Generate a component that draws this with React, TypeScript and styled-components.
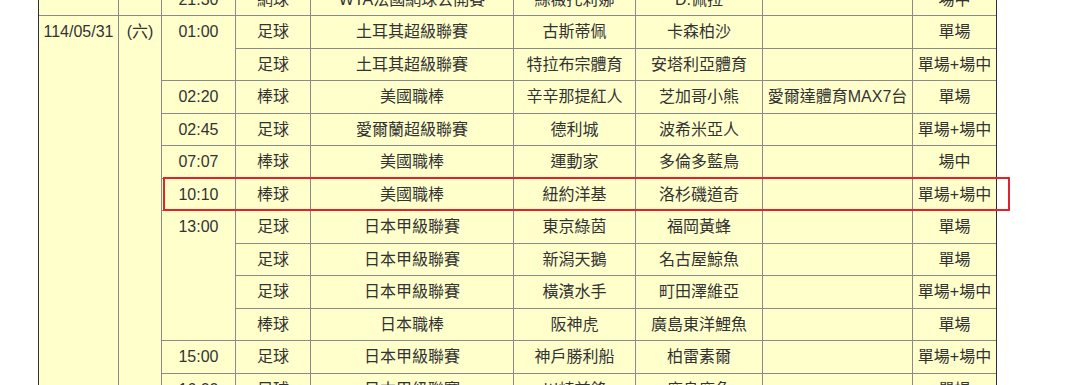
import React from "react";
import styled, { createGlobalStyle } from "styled-components";

const GlobalStyle = createGlobalStyle`
  html, body {
    margin: 0;
    padding: 0;
    background: #ffffff;
  }
  body {
    font-family: "Liberation Sans", "Noto Sans CJK TC", sans-serif;
  }
`;

const Page = styled.div`
  position: relative;
  margin-top: -16.5px;
  padding-left: 38px;
`;

const Frame = styled.div`
  display: inline-block;
  border-left: 1px solid #2e2e38;
  border-right: 1px solid #2e2e38;
`;

const Schedule = styled.table`
  border-collapse: separate;
  border-spacing: 0;
  table-layout: fixed;
  width: 957px;
  background: #ffffcc;
  color: #333333;
  font-size: 16px;
`;

const Row = styled.tr`
  height: 32.5px;
`;

const Cell = styled.td<{ $last?: boolean }>`
  box-sizing: border-box;
  padding: 5px 0 0;
  line-height: 22px;
  text-align: center;
  vertical-align: top;
  white-space: nowrap;
  overflow: hidden;
  border-bottom: 1px solid #8a8a8a;
  border-right: ${(p) => (p.$last ? "none" : "1px solid #8a8a8a")};
`;

// red marker drawn around the picked game
const Marker = styled.div`
  position: absolute;
  top: 193.5px;
  left: 163px;
  width: 847px;
  height: 34px;
  box-sizing: border-box;
  border: 2px solid #e3222b;
  pointer-events: none;
`;

interface Game {
  time?: string;
  span?: number;
  sport: string;
  league: string;
  home: string;
  away: string;
  channel?: string;
  bet: string;
}

const games: Game[] = [
  { time: "01:00", span: 2, sport: "足球", league: "土耳其超級聯賽", home: "古斯蒂佩", away: "卡森柏沙", bet: "單場" },
  { sport: "足球", league: "土耳其超級聯賽", home: "特拉布宗體育", away: "安塔利亞體育", bet: "單場+場中" },
  { time: "02:20", sport: "棒球", league: "美國職棒", home: "辛辛那提紅人", away: "芝加哥小熊", channel: "愛爾達體育MAX7台", bet: "單場" },
  { time: "02:45", sport: "足球", league: "愛爾蘭超級聯賽", home: "德利城", away: "波希米亞人", bet: "單場+場中" },
  { time: "07:07", sport: "棒球", league: "美國職棒", home: "運動家", away: "多倫多藍鳥", bet: "場中" },
  { time: "10:10", sport: "棒球", league: "美國職棒", home: "紐約洋基", away: "洛杉磯道奇", bet: "單場+場中" },
  { time: "13:00", span: 4, sport: "足球", league: "日本甲級聯賽", home: "東京綠茵", away: "福岡黃蜂", bet: "單場" },
  { sport: "足球", league: "日本甲級聯賽", home: "新潟天鵝", away: "名古屋鯨魚", bet: "單場" },
  { sport: "足球", league: "日本甲級聯賽", home: "橫濱水手", away: "町田澤維亞", bet: "單場+場中" },
  { sport: "棒球", league: "日本職棒", home: "阪神虎", away: "廣島東洋鯉魚", bet: "單場" },
  { time: "15:00", sport: "足球", league: "日本甲級聯賽", home: "神戶勝利船", away: "柏雷素爾", bet: "單場+場中" },
  { time: "16:00", sport: "足球", league: "日本甲級聯賽", home: "川崎前鋒", away: "鹿島鹿角", bet: "單場" },
];

const widths = [80, 43, 74, 75, 203, 122, 127, 150, 83];

const GameCells = ({ g }: { g: Game }) => (
  <>
    {g.time && <Cell rowSpan={g.span || 1}>{g.time}</Cell>}
    <Cell>{g.sport}</Cell>
    <Cell>{g.league}</Cell>
    <Cell>{g.home}</Cell>
    <Cell>{g.away}</Cell>
    <Cell>{g.channel || ""}</Cell>
    <Cell $last>{g.bet}</Cell>
  </>
);

const App: React.FC = () => {
  return (
    <>
      <GlobalStyle />
      <Page>
        <Frame>
          <Schedule>
            <colgroup>
              {widths.map((w, i) => (
                <col key={i} style={{ width: w }} />
              ))}
            </colgroup>
            <tbody>
              <Row>
                <Cell />
                <Cell />
                <GameCells
                  g={{ time: "21:30", sport: "網球", league: "WTA法國網球公開賽", home: "絲薇托莉娜", away: "D.佩拉", bet: "場中" }}
                />
              </Row>
              {games.map((g, i) => (
                <Row key={i}>
                  {i === 0 && (
                    <>
                      <Cell rowSpan={games.length}>114/05/31</Cell>
                      <Cell rowSpan={games.length}>(六)</Cell>
                    </>
                  )}
                  <GameCells g={g} />
                </Row>
              ))}
            </tbody>
          </Schedule>
        </Frame>
        <Marker />
      </Page>
    </>
  );
};

export default App;
